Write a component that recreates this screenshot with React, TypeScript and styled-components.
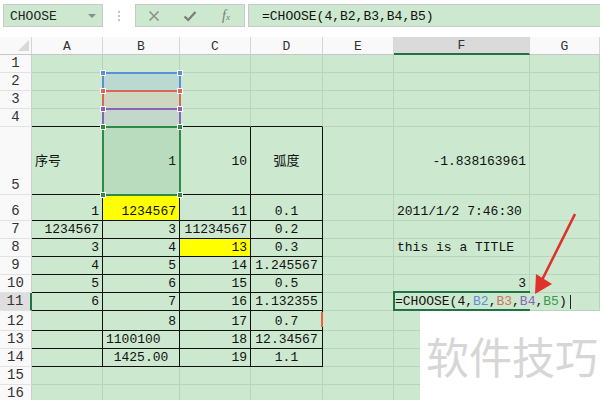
import React, { ReactNode } from "react";
import styled, { createGlobalStyle } from "styled-components";

const GREEN = "#cce8cf";
const GRID = "#b9d4bc";
const INK = "#101010";
const XL = "#217346";
const MONO = `"Liberation Mono", "Noto Sans CJK SC", monospace`;

const GlobalStyle = createGlobalStyle`
  html, body { margin: 0; padding: 0; background: #fff; }
  body { width: 600px; height: 400px; overflow: hidden; font-family: ${MONO}; }
  * { box-sizing: border-box; }
`;

const ROW_H = [18, 18, 18, 18, 68, 26, 18, 18, 18, 18, 18, 20, 18, 18, 18, 18];
const COLS = ["A", "B", "C", "D", "E", "F", "G"];

type Val = { t: string; a?: "l" | "r" | "c"; hl?: boolean };
const r = (t: string, hl?: boolean): Val => ({ t, a: "r", hl });
const l = (t: string): Val => ({ t, a: "l" });
const c = (t: string): Val => ({ t, a: "c" });

const DATA: Record<number, (Val | null)[]> = {
  5: [l("序号"), r("1"), r("10"), c("弧度"), null, r("-1.838163961"), null],
  6: [r("1"), r("1234567", true), r("11"), c("0.1"), null, l("2011/1/2 7:46:30"), null],
  7: [r("1234567"), r("3"), r("11234567"), c("0.2"), null, null, null],
  8: [r("3"), r("4"), r("13", true), c("0.3"), null, l("this is a TITLE"), null],
  9: [r("4"), r("5"), r("14"), c("1.245567"), null, null, null],
  10: [r("5"), r("6"), r("15"), c("0.5"), null, r("3"), null],
  11: [r("6"), r("7"), r("16"), c("1.132355"), null, null, null],
  12: [null, r("8"), r("17"), c("0.7"), null, null, null],
  13: [null, l("1100100"), r("18"), c("12.34567"), null, null, null],
  14: [null, c("1425.00"), r("19"), c("1.1"), null, null, null],
};

const REFS = [
  { top: 72, height: 20, color: "#5b8fd8", tint: "rgba(91,143,216,0.16)" },
  { top: 90, height: 20, color: "#d9655b", tint: "rgba(217,101,91,0.13)" },
  { top: 108, height: 20, color: "#8a63b8", tint: "rgba(138,99,184,0.12)" },
  { top: 126, height: 70, color: "#2f8a47", tint: "rgba(47,138,71,0.12)" },
];

export default function App() {
  return (
    <Page>
      <GlobalStyle />
      <Toolbar>
        <NameBox>
          CHOOSE
          <Caret />
        </NameBox>
        <Grip>
          <GripDot />
          <GripDot />
          <GripDot />
        </Grip>
        <ActionBox>
          <svg width="12" height="12" viewBox="0 0 12 12">
            <path d="M1.5 1.5L10.5 10.5M10.5 1.5L1.5 10.5" stroke="#8e8e8e" strokeWidth="1.6" fill="none" />
          </svg>
          <svg width="14" height="12" viewBox="0 0 14 12">
            <path d="M1.5 6.5L5.2 10L12.5 2" stroke="#7b7b7b" strokeWidth="2.2" fill="none" />
          </svg>
          <FxLabel>
            f<small>x</small>
          </FxLabel>
        </ActionBox>
        <FormulaBox>=CHOOSE(4,B2,B3,B4,B5)</FormulaBox>
      </Toolbar>

      <Sheet>
        <Corner>
          <CornerMark />
        </Corner>
        {COLS.map((col) => (
          <ColHead key={col} $active={col === "F"}>
            {col}
          </ColHead>
        ))}
        {ROW_H.map((_, i) => {
          const row = i + 1;
          const vals = DATA[row] ?? [];
          return (
            <React.Fragment key={row}>
              <RowHead $active={row === 11}>{row}</RowHead>
              {COLS.map((col, ci) => {
                const v = vals[ci];
                const inTable = row >= 5 && row <= 14 && ci <= 3;
                const topEdge = row === 4 && ci <= 3;
                if (row === 11 && col === "F") {
                  return (
                    <ActiveCell key={col}>
                      <Editor />
                    </ActiveCell>
                  );
                }
                return (
                  <Cell
                    key={col}
                    $align={v?.a}
                    $fill={v?.hl ? "#ffff00" : undefined}
                    $table={inTable}
                    $topEdge={topEdge}
                    $middle={row === 5}
                    $mark={row === 12 && col === "D"}
                  >
                    {v?.t}
                  </Cell>
                );
              })}
            </React.Fragment>
          );
        })}
      </Sheet>

      {REFS.map((ref) => (
        <RefBox key={ref.top} style={{ top: ref.top, height: ref.height }} $color={ref.color} $tint={ref.tint}>
          <Handle $color={ref.color} $x="left" $y="top" />
          <Handle $color={ref.color} $x="right" $y="top" />
          <Handle $color={ref.color} $x="left" $y="bottom" />
          <Handle $color={ref.color} $x="right" $y="bottom" />
        </RefBox>
      ))}

      <Arrow width="80" height="100" viewBox="0 0 80 100">
        <path d="M55 14L22 80" stroke="#e1312b" strokeWidth="2.6" fill="none" />
        <polygon points="15,94 16,74 32,84" fill="#e1312b" />
      </Arrow>

      <Watermark>软件技巧</Watermark>
    </Page>
  );
}

function Editor() {
  const part = (t: string, color: string): ReactNode => <span style={{ color }}>{t}</span>;
  return (
    <EditText>
      =CHOOSE(4,{part("B2", "#5b8fd8")},{part("B3", "#d3705f")},{part("B4", "#8a63b8")},{part("B5", "#3a9a4a")})
      <Cursor />
    </EditText>
  );
}

const Page = styled.div`
  position: relative;
  width: 600px;
  height: 400px;
  overflow: hidden;
  background: #fff;
`;

const Toolbar = styled.div`
  height: 37px;
  display: flex;
  align-items: flex-start;
  padding: 4px 0 0 3px;
  background: #fff;
`;

const NameBox = styled.div`
  width: 100px;
  height: 23px;
  border: 1px solid #c9c9c9;
  background: ${GREEN};
  display: flex;
  align-items: center;
  justify-content: space-between;
  padding: 1px 6px 0 6px;
  font: 13px ${MONO};
  color: #222;
`;

const Caret = styled.span`
  width: 0;
  height: 0;
  border-left: 4px solid transparent;
  border-right: 4px solid transparent;
  border-top: 4px solid #8c8c8c;
`;

const Grip = styled.div`
  width: 32px;
  height: 23px;
  display: flex;
  flex-direction: column;
  align-items: center;
  justify-content: center;
  gap: 2px;
`;

const GripDot = styled.span`
  width: 2px;
  height: 2px;
  background: #c4c4c4;
`;

const ActionBox = styled.div`
  width: 110px;
  height: 23px;
  border: 1px solid #c9c9c9;
  background: ${GREEN};
  display: grid;
  grid-template-columns: repeat(3, 1fr);
  align-items: center;
  justify-items: center;
`;

const FxLabel = styled.span`
  font: italic 14px "Liberation Serif", serif;
  color: #7a7a7a;
  small {
    font-size: 9px;
  }
`;

const FormulaBox = styled.div`
  flex: 1;
  margin-left: 3px;
  height: 23px;
  border: 1px solid #c9c9c9;
  border-right: none;
  background: ${GREEN};
  display: flex;
  align-items: center;
  padding: 1px 0 0 13px;
  font: 13px ${MONO};
  color: #111;
`;

const Sheet = styled.div`
  display: grid;
  grid-template-columns: 32px 71px 77px 71px 72px 71px 136px 70px;
  grid-template-rows: 18px ${ROW_H.map((h) => `${h}px`).join(" ")};
`;

const Corner = styled.div`
  background: #f9f9f9;
  border-right: 1px solid #d4d4d4;
  border-bottom: 1px solid #c6c6c6;
  display: flex;
  align-items: flex-end;
  justify-content: flex-end;
  padding: 0 2px 3px 0;
`;

const CornerMark = styled.span`
  width: 0;
  height: 0;
  border-left: 11px solid transparent;
  border-bottom: 11px solid #d8d8d8;
`;

const ColHead = styled.div<{ $active?: boolean }>`
  display: flex;
  align-items: center;
  justify-content: center;
  padding-top: 1px;
  background: ${(p) => (p.$active ? "#dadada" : "#f9f9f9")};
  border-right: 1px solid #d6d6d6;
  border-bottom: ${(p) => (p.$active ? `2px solid ${XL}` : "1px solid #c6c6c6")};
  font: 13px ${MONO};
  color: #333;
`;

const RowHead = styled.div<{ $active?: boolean }>`
  display: flex;
  align-items: flex-end;
  justify-content: center;
  padding-bottom: 2px;
  background: ${(p) => (p.$active ? "#dedede" : "#f9f9f9")};
  border-right: ${(p) => (p.$active ? `2px solid ${XL}` : "1px solid #cdcdcd")};
  border-bottom: 1px solid #e2e2e2;
  font: 14px/14px ${MONO};
  color: #333;
`;

const Cell = styled.div<{
  $align?: "l" | "r" | "c";
  $fill?: string;
  $table?: boolean;
  $topEdge?: boolean;
  $middle?: boolean;
  $mark?: boolean;
}>`
  position: relative;
  display: flex;
  min-width: 0;
  align-items: ${(p) => (p.$middle ? "center" : "flex-end")};
  justify-content: ${(p) => (p.$align === "r" ? "flex-end" : p.$align === "c" ? "center" : "flex-start")};
  padding: ${(p) => (p.$middle ? "2px 3px 0 3px" : "0 3px 1px 3px")};
  background: ${(p) => p.$fill ?? GREEN};
  border-right: 1px solid ${(p) => (p.$table ? INK : GRID)};
  border-bottom: 1px solid ${(p) => (p.$table || p.$topEdge ? INK : GRID)};
  font: 13px/14px ${MONO};
  color: #111;
  white-space: nowrap;

  &::after {
    content: "";
    display: ${(p) => (p.$mark ? "block" : "none")};
    position: absolute;
    right: -1px;
    top: 1px;
    bottom: 3px;
    width: 2px;
    background: #e6623c;
  }
`;

const ActiveCell = styled.div`
  position: relative;
  display: flex;
  align-items: flex-end;
  padding: 0 0 1px 1px;
  background: ${GREEN};
  border-right: 1px solid ${GRID};
  border-bottom: 1px solid ${GRID};
  overflow: visible;

  &::before {
    content: "";
    position: absolute;
    top: -2px;
    left: -1px;
    right: -1px;
    bottom: -1px;
    border: 2px solid ${XL};
    border-right: none;
    z-index: 1;
  }
`;

const EditText = styled.span`
  position: relative;
  z-index: 2;
  display: flex;
  align-items: center;
  background: ${GREEN};
  font: 13px/15px ${MONO};
  color: #111;
  white-space: nowrap;
  padding-right: 2px;
`;

const Cursor = styled.span`
  width: 1px;
  height: 14px;
  margin-left: 3px;
  background: #222;
`;

const RefBox = styled.div<{ $color: string; $tint: string }>`
  position: absolute;
  left: 102px;
  width: 79px;
  border: 2px solid ${(p) => p.$color};
  background: ${(p) => p.$tint};
`;

const Handle = styled.span<{ $color: string; $x: "left" | "right"; $y: "top" | "bottom" }>`
  position: absolute;
  ${(p) => p.$x}: -4px;
  ${(p) => p.$y}: -4px;
  width: 6px;
  height: 6px;
  background: ${(p) => p.$color};
  border: 1px solid #fff;
  z-index: 1;
`;

const Arrow = styled.svg`
  position: absolute;
  left: 520px;
  top: 200px;
  z-index: 3;
`;

const Watermark = styled.div`
  position: absolute;
  left: 420px;
  top: 311px;
  right: 0;
  bottom: 0;
  z-index: 4;
  background: #fff;
  display: flex;
  align-items: center;
  padding: 0 0 2px 6px;
  font: 43px "Noto Sans CJK SC", sans-serif;
  color: #d6d6d6;
  white-space: nowrap;
`;
